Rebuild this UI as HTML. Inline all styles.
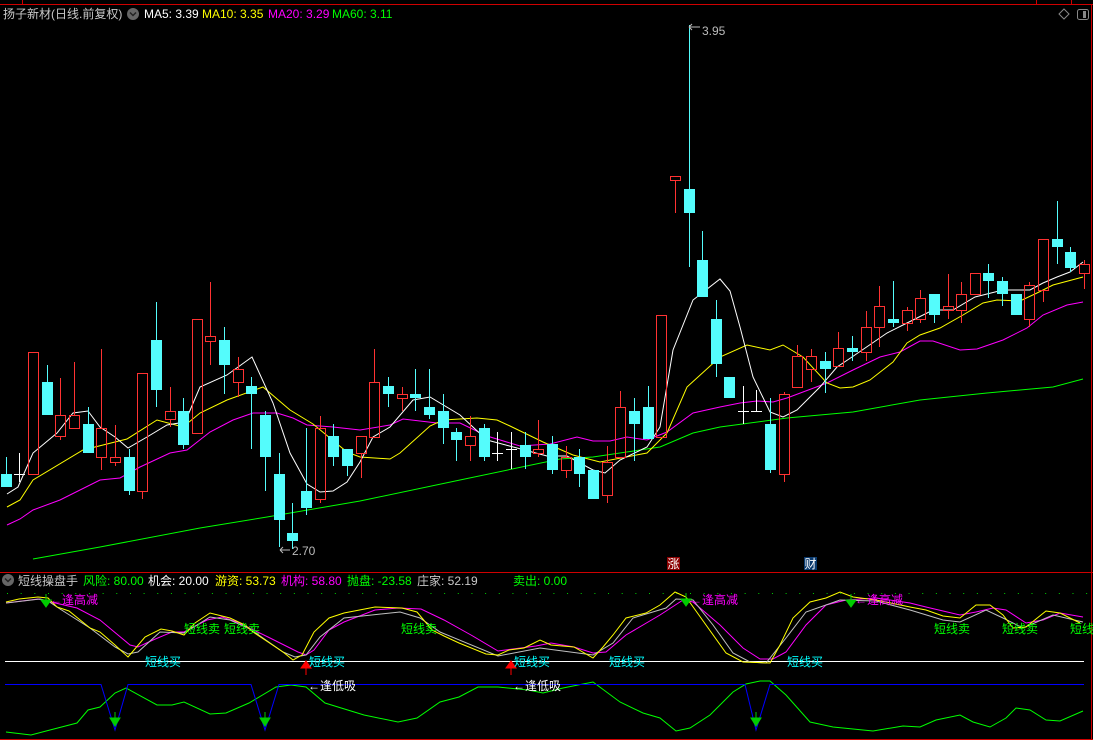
<!DOCTYPE html>
<html><head><meta charset="utf-8"><style>
html,body{margin:0;padding:0;background:#000;width:1093px;height:740px;overflow:hidden}
svg{display:block}
text{font-family:"Liberation Sans","Noto Sans CJK SC",sans-serif;font-size:12px}
</style></head><body>
<svg width="1093" height="740" viewBox="0 0 1093 740" xmlns="http://www.w3.org/2000/svg">
<rect width="1093" height="740" fill="#000"/>
<g stroke="#d00000" stroke-width="1" shape-rendering="crispEdges">
<line x1="0" y1="4.5" x2="1093" y2="4.5"/>
<line x1="22.5" y1="0" x2="22.5" y2="4"/>
<line x1="1036.5" y1="0" x2="1036.5" y2="4"/>
<line x1="1071.5" y1="0" x2="1071.5" y2="4"/>
<line x1="1091.5" y1="4" x2="1091.5" y2="740"/>
<line x1="0" y1="572.5" x2="1093" y2="572.5"/>
<line x1="0" y1="739.5" x2="1093" y2="739.5"/>
</g>
<!-- header -->
<text x="3" y="18" fill="#c8c8c8">扬子新材(日线.前复权)</text>
<circle cx="133" cy="14" r="6" fill="#666"/>
<path d="M130 12.5 L133 15.5 L136 12.5" stroke="#222" stroke-width="1.5" fill="none"/>
<text x="144" y="18" fill="#fff">MA5: 3.39</text>
<text x="202" y="18" fill="#ff0">MA10: 3.35</text>
<text x="268" y="18" fill="#f0f">MA20: 3.29</text>
<text x="332" y="18" fill="#0f0">MA60: 3.11</text>
<path d="M1064 9 L1069 14 L1064 19 L1059 14 Z" stroke="#888" fill="none"/>
<rect x="1077.5" y="9.5" width="11" height="10" rx="2" stroke="#888" fill="none"/>
<rect x="1083" y="11" width="3" height="7" fill="#888"/>
<!-- MA lines -->
<g fill="none" stroke-width="1">
<polyline stroke="#0f0" points="33,559 100,547 200,528 267,517 360,501 460,480 560,459 593,457 660,447 693,433 720,427 787,418 853,412 920,400 987,393 1053,387 1083,379"/>
<polyline stroke="#f0f" points="7,525 20,519 33,510 60,500 100,480 120,478 140,467 170,453 187,450 210,432 233,420 253,413 277,413 293,418 307,425 333,427 360,430 390,425 403,419 437,423 460,423 487,436 520,446 550,444 577,437 593,441 610,441 627,437 647,440 667,432 693,413 720,407 740,403 757,401 773,402 787,398 803,392 827,383 853,370 880,357 900,352 920,341 933,341 960,350 977,349 1003,340 1027,328 1043,315 1067,305 1083,302"/>
<polyline stroke="#ff0" points="7,507 20,500 33,480 83,450 127,439 157,420 183,427 200,413 227,400 263,387 290,410 313,424 347,452 360,457 390,459 400,453 430,426 443,420 477,418 497,420 510,426 543,442 573,455 600,462 647,453 667,433 687,387 720,357 747,345 770,350 783,345 803,357 827,383 840,388 853,387 870,380 893,362 907,343 920,335 940,328 963,315 983,303 997,300 1020,301 1037,293 1053,285 1083,277"/>
<polyline stroke="#fff" points="7,494 18,487 33,453 57,433 73,413 88,411 100,427 115,437 128,448 147,437 167,425 185,422 200,387 227,375 252,357 273,403 290,453 307,484 320,492 333,491 347,482 360,462 373,437 390,427 413,400 430,397 460,415 487,440 517,448 547,456 567,456 593,470 605,473 620,460 647,447 660,427 673,350 693,300 720,279 730,291 740,327 753,377 770,412 783,417 797,410 820,387 837,367 852,357 887,333 907,323 933,310 953,310 975,297 1003,290 1030,290 1043,283 1057,277 1070,272 1083,262"/>
</g>
<!-- candles -->
<g shape-rendering="crispEdges">
<g stroke="#54fcfc" stroke-width="1">
<line x1="6.5" y1="457" x2="6.5" y2="487"/><line x1="47.5" y1="365" x2="47.5" y2="415"/><line x1="88.5" y1="407" x2="88.5" y2="453"/><line x1="129.5" y1="449" x2="129.5" y2="495"/><line x1="156.5" y1="302" x2="156.5" y2="407"/><line x1="183.5" y1="398" x2="183.5" y2="449"/><line x1="224.5" y1="327" x2="224.5" y2="394"/><line x1="251.5" y1="377" x2="251.5" y2="449"/><line x1="265.5" y1="411" x2="265.5" y2="491"/><line x1="279.5" y1="453" x2="279.5" y2="547"/><line x1="292.5" y1="503" x2="292.5" y2="549"/><line x1="306.5" y1="428" x2="306.5" y2="515"/><line x1="333.5" y1="424" x2="333.5" y2="466"/><line x1="347.5" y1="449" x2="347.5" y2="476"/><line x1="388.5" y1="377" x2="388.5" y2="407"/><line x1="415.5" y1="369" x2="415.5" y2="411"/><line x1="429.5" y1="369" x2="429.5" y2="419"/><line x1="443.5" y1="394" x2="443.5" y2="444"/><line x1="456.5" y1="428" x2="456.5" y2="461"/><line x1="484.5" y1="424" x2="484.5" y2="461"/><line x1="525.5" y1="432" x2="525.5" y2="469"/><line x1="552.5" y1="436" x2="552.5" y2="474"/><line x1="579.5" y1="449" x2="579.5" y2="487"/><line x1="593.5" y1="470" x2="593.5" y2="499"/><line x1="634.5" y1="398" x2="634.5" y2="461"/><line x1="648.5" y1="386" x2="648.5" y2="439"/><line x1="689.5" y1="25" x2="689.5" y2="267"/><line x1="702.5" y1="231" x2="702.5" y2="297"/><line x1="716.5" y1="300" x2="716.5" y2="377"/><line x1="729.5" y1="377" x2="729.5" y2="398"/><line x1="770.5" y1="398" x2="770.5" y2="473"/><line x1="825.5" y1="352" x2="825.5" y2="393"/><line x1="852.5" y1="336" x2="852.5" y2="361"/><line x1="893.5" y1="281" x2="893.5" y2="327"/><line x1="934.5" y1="294" x2="934.5" y2="323"/><line x1="988.5" y1="264" x2="988.5" y2="298"/><line x1="1002.5" y1="277" x2="1002.5" y2="306"/><line x1="1057.5" y1="201" x2="1057.5" y2="264"/><line x1="1070.5" y1="247" x2="1070.5" y2="272"/>
</g>
<g fill="#54fcfc">
<rect x="1" y="474" width="11" height="13"/><rect x="42" y="382" width="11" height="33"/><rect x="83" y="424" width="11" height="29"/><rect x="124" y="457" width="11" height="34"/><rect x="151" y="340" width="11" height="50"/><rect x="178" y="411" width="11" height="34"/><rect x="219" y="340" width="11" height="25"/><rect x="246" y="386" width="11" height="8"/><rect x="260" y="415" width="11" height="42"/><rect x="274" y="474" width="11" height="46"/><rect x="287" y="533" width="11" height="8"/><rect x="301" y="491" width="11" height="17"/><rect x="328" y="436" width="11" height="21"/><rect x="342" y="449" width="11" height="17"/><rect x="383" y="386" width="11" height="8"/><rect x="410" y="394" width="11" height="4"/><rect x="424" y="407" width="11" height="8"/><rect x="438" y="411" width="11" height="17"/><rect x="451" y="432" width="11" height="8"/><rect x="479" y="428" width="11" height="29"/><rect x="520" y="445" width="11" height="12"/><rect x="547" y="444" width="11" height="26"/><rect x="574" y="457" width="11" height="17"/><rect x="588" y="470" width="11" height="29"/><rect x="629" y="411" width="11" height="13"/><rect x="643" y="407" width="11" height="32"/><rect x="684" y="189" width="11" height="24"/><rect x="697" y="260" width="11" height="37"/><rect x="711" y="319" width="11" height="45"/><rect x="724" y="377" width="11" height="21"/><rect x="765" y="424" width="11" height="46"/><rect x="820" y="361" width="11" height="8"/><rect x="847" y="348" width="11" height="4"/><rect x="888" y="319" width="11" height="4"/><rect x="929" y="294" width="11" height="21"/><rect x="983" y="273" width="11" height="8"/><rect x="997" y="281" width="11" height="13"/><rect x="1011" y="294" width="11" height="21"/><rect x="1052" y="239" width="11" height="8"/><rect x="1065" y="252" width="11" height="16"/>
</g>
<g stroke="#ff3232" stroke-width="1" fill="none">
<rect x="28.5" y="352.5" width="10" height="122"/>
<line x1="60.5" y1="378" x2="60.5" y2="415"/><line x1="60.5" y1="436" x2="60.5" y2="440"/><rect x="55.5" y="415.5" width="10" height="21"/>
<line x1="74.5" y1="362" x2="74.5" y2="415"/><rect x="69.5" y="415.5" width="10" height="13"/>
<line x1="101.5" y1="349" x2="101.5" y2="428"/><line x1="101.5" y1="457" x2="101.5" y2="470"/><rect x="96.5" y="428.5" width="10" height="29"/>
<line x1="115.5" y1="425" x2="115.5" y2="457"/><line x1="115.5" y1="462" x2="115.5" y2="466"/><rect x="110.5" y="457.5" width="10" height="5"/>
<line x1="142.5" y1="491" x2="142.5" y2="499"/><rect x="137.5" y="373.5" width="10" height="118"/>
<line x1="170.5" y1="387" x2="170.5" y2="411"/><line x1="170.5" y1="419" x2="170.5" y2="427"/><rect x="165.5" y="411.5" width="10" height="8"/>
<rect x="192.5" y="319.5" width="10" height="114"/>
<line x1="210.5" y1="282" x2="210.5" y2="336"/><line x1="210.5" y1="341" x2="210.5" y2="365"/><rect x="205.5" y="336.5" width="10" height="5"/>
<line x1="238.5" y1="357" x2="238.5" y2="369"/><line x1="238.5" y1="382" x2="238.5" y2="397"/><rect x="233.5" y="369.5" width="10" height="13"/>
<line x1="320.5" y1="416" x2="320.5" y2="428"/><line x1="320.5" y1="499" x2="320.5" y2="503"/><rect x="315.5" y="428.5" width="10" height="71"/>
<line x1="361.5" y1="453" x2="361.5" y2="478"/><rect x="356.5" y="436.5" width="10" height="17"/>
<line x1="374.5" y1="349" x2="374.5" y2="382"/><rect x="369.5" y="382.5" width="10" height="55"/>
<line x1="402.5" y1="387" x2="402.5" y2="394"/><line x1="402.5" y1="398" x2="402.5" y2="411"/><rect x="397.5" y="394.5" width="10" height="4"/>
<line x1="470.5" y1="416" x2="470.5" y2="436"/><line x1="470.5" y1="445" x2="470.5" y2="461"/><rect x="465.5" y="436.5" width="10" height="9"/>
<line x1="538.5" y1="420" x2="538.5" y2="449"/><line x1="538.5" y1="453" x2="538.5" y2="457"/><rect x="533.5" y="449.5" width="10" height="4"/>
<line x1="566.5" y1="446" x2="566.5" y2="457"/><line x1="566.5" y1="470" x2="566.5" y2="478"/><rect x="561.5" y="457.5" width="10" height="13"/>
<line x1="607.5" y1="446" x2="607.5" y2="462"/><line x1="607.5" y1="495" x2="607.5" y2="503"/><rect x="602.5" y="462.5" width="10" height="33"/>
<line x1="620.5" y1="391" x2="620.5" y2="407"/><rect x="615.5" y="407.5" width="10" height="50"/>
<rect x="656.5" y="315.5" width="10" height="122"/>
<line x1="675.5" y1="180" x2="675.5" y2="213"/><rect x="670.5" y="176.5" width="10" height="4"/>
<line x1="784.5" y1="392" x2="784.5" y2="394"/><line x1="784.5" y1="474" x2="784.5" y2="482"/><rect x="779.5" y="394.5" width="10" height="80"/>
<line x1="797.5" y1="345" x2="797.5" y2="356"/><rect x="792.5" y="356.5" width="10" height="31"/>
<line x1="811.5" y1="349" x2="811.5" y2="356"/><line x1="811.5" y1="369" x2="811.5" y2="382"/><rect x="806.5" y="356.5" width="10" height="13"/>
<line x1="838.5" y1="332" x2="838.5" y2="348"/><rect x="833.5" y="348.5" width="10" height="18"/>
<line x1="866.5" y1="311" x2="866.5" y2="327"/><line x1="866.5" y1="352" x2="866.5" y2="361"/><rect x="861.5" y="327.5" width="10" height="25"/>
<line x1="879.5" y1="286" x2="879.5" y2="306"/><line x1="879.5" y1="327" x2="879.5" y2="347"/><rect x="874.5" y="306.5" width="10" height="21"/>
<line x1="907.5" y1="307" x2="907.5" y2="310"/><line x1="907.5" y1="323" x2="907.5" y2="331"/><rect x="902.5" y="310.5" width="10" height="13"/>
<line x1="920.5" y1="290" x2="920.5" y2="298"/><line x1="920.5" y1="319" x2="920.5" y2="323"/><rect x="915.5" y="298.5" width="10" height="21"/>
<line x1="948.5" y1="274" x2="948.5" y2="306"/><line x1="948.5" y1="310" x2="948.5" y2="319"/><rect x="943.5" y="306.5" width="10" height="4"/>
<line x1="961.5" y1="282" x2="961.5" y2="294"/><line x1="961.5" y1="310" x2="961.5" y2="323"/><rect x="956.5" y="294.5" width="10" height="16"/>
<rect x="970.5" y="273.5" width="10" height="21"/>
<line x1="1029.5" y1="282" x2="1029.5" y2="285"/><line x1="1029.5" y1="319" x2="1029.5" y2="327"/><rect x="1024.5" y="285.5" width="10" height="34"/>
<line x1="1043.5" y1="290" x2="1043.5" y2="302"/><rect x="1038.5" y="239.5" width="10" height="51"/>
<line x1="1084.5" y1="260" x2="1084.5" y2="264"/><line x1="1084.5" y1="273" x2="1084.5" y2="289"/><rect x="1079.5" y="264.5" width="10" height="9"/>
</g>
<g stroke="#fff" stroke-width="1">
<line x1="19.5" y1="453" x2="19.5" y2="482"/><line x1="14" y1="474.5" x2="25" y2="474.5"/>
<line x1="497.5" y1="432" x2="497.5" y2="461"/><line x1="492" y1="453.5" x2="503" y2="453.5"/>
<line x1="511.5" y1="432" x2="511.5" y2="469"/><line x1="506" y1="449.5" x2="517" y2="449.5"/>
<line x1="743.5" y1="386" x2="743.5" y2="424"/><line x1="738" y1="411.5" x2="749" y2="411.5"/>
<line x1="756.5" y1="390" x2="756.5" y2="411"/><line x1="751" y1="411.5" x2="762" y2="411.5"/>
</g>
</g>
<!-- price labels -->
<path d="M689 27 L700 27 M689 27 L692 24 M689 27 L692 30" stroke="#bbb" fill="none"/>
<text x="702" y="35" fill="#bbb">3.95</text>
<path d="M280 550 L290 550 M280 550 L283 547 M280 550 L283 553" stroke="#bbb" fill="none"/>
<text x="292" y="555" fill="#bbb">2.70</text>
<rect x="667" y="557" width="13" height="13" fill="#8b0000"/>
<text x="667.5" y="568" fill="#fff" style="font-size:12px">涨</text>
<rect x="804" y="557" width="13" height="13" fill="#0a3a6e"/>
<text x="804.5" y="568" fill="#fff" style="font-size:12px">财</text>
<!-- lower header -->
<circle cx="8" cy="580" r="6" fill="#666"/>
<path d="M5 578.5 L8 581.5 L11 578.5" stroke="#222" stroke-width="1.5" fill="none"/>
<text x="18" y="585" fill="#c8c8c8">短线操盘手</text>
<text x="83" y="585" fill="#0f0">风险: 80.00</text>
<text x="148" y="585" fill="#fff">机会: 20.00</text>
<text x="215" y="585" fill="#ff0">游资: 53.73</text>
<text x="281" y="585" fill="#f0f">机构: 58.80</text>
<text x="347" y="585" fill="#0f0">抛盘: -23.58</text>
<text x="417" y="585" fill="#c8c8c8">庄家: 52.19</text>
<text x="513" y="585" fill="#0f0">卖出: 0.00</text>
<!-- dotted -->
<line x1="7" y1="593.5" x2="1093" y2="593.5" stroke="#0c0" stroke-dasharray="1 12.66"/>
<line x1="5" y1="661.5" x2="1084" y2="661.5" stroke="#fff"/>
<!-- indicator lines -->
<g fill="none" stroke-width="1">
<polyline stroke="#f0f" points="6,603 38,599 77,608 100,620 130,645 138,647 153,640 172,632 184,632 207,620 222,617 237,622 268,637 298,652 306,655 314,650 329,630 344,622 375,610 398,608 421,609 444,620 471,635 498,651 536,646 551,643 574,647 593,653 606,652 626,635 660,615 683,600 693,602 720,625 743,648 760,659 773,659 786,652 806,625 826,605 846,600 876,598 910,603 926,607 960,615 976,612 993,608 1006,610 1026,623 1043,620 1060,613 1083,617"/>
<polyline stroke="#c0c0c0" points="6,603 40,599 48,601 60,609 90,628 115,647 128,654 138,652 160,632 184,633 210,617 230,620 250,629 283,652 295,657 306,655 320,637 344,618 400,612 420,618 440,632 498,656 540,648 593,655 613,643 633,618 666,608 676,599 693,600 713,625 733,653 750,662 766,663 786,638 806,612 840,600 876,601 910,610 943,620 960,622 986,610 1003,618 1023,628 1053,615 1083,622"/>
<polyline stroke="#ff0" points="6,602 19,599 38,597 48,598 57,607 69,611 90,628 100,632 115,645 128,657 134,650 145,637 161,629 172,631 184,635 195,623 210,613 230,618 245,625 253,632 268,642 283,652 293,660 302,655 314,632 329,618 344,613 375,607 402,608 417,612 432,630 444,636 459,643 486,654 498,655 509,650 524,648 540,640 551,645 574,647 593,658 603,647 613,635 626,618 646,613 660,605 675,592 686,597 706,625 726,653 743,662 770,663 780,645 793,618 810,602 826,598 840,592 853,597 876,600 910,607 926,610 943,616 960,618 976,605 990,605 1003,615 1013,628 1026,627 1046,611 1060,613 1080,623"/>
<polyline stroke="#0f0" points="6,732 31,735 50,730 77,723 88,710 100,707 115,693 126,688 157,705 172,705 184,702 210,714 226,713 249,703 276,687 291,685 306,687 325,703 364,715 398,722 417,718 440,702 459,697 478,687 498,687 528,690 543,693 563,688 593,682 620,702 643,713 660,718 676,731 690,728 710,715 733,692 746,684 760,681 770,681 786,695 810,722 833,727 873,731 903,726 920,727 936,720 960,715 973,722 990,727 1006,718 1016,708 1030,710 1046,720 1060,721 1083,711"/>
<polyline stroke="#0000ff" points="5,684.5 101,684.5 115,730 128,684.5 251,684.5 265,730 279,684.5 745,684.5 756,730 770,684.5 1084,684.5"/>
</g>
<!-- arrows -->
<g fill="#0c0" stroke="#0c0">
<line x1="46" y1="594" x2="46" y2="602"/><path d="M41 600 L51 600 L46 607 Z"/>
<line x1="686" y1="593" x2="686" y2="601"/><path d="M681 599 L691 599 L686 606 Z"/>
<line x1="851" y1="594" x2="851" y2="602"/><path d="M846 600 L856 600 L851 607 Z"/>
<line x1="115" y1="712" x2="115" y2="720"/><path d="M110 718 L120 718 L115 726 Z"/>
<line x1="265" y1="712" x2="265" y2="720"/><path d="M260 718 L270 718 L265 726 Z"/>
<line x1="756" y1="712" x2="756" y2="720"/><path d="M751 718 L761 718 L756 726 Z"/>
</g>
<g fill="#f00" stroke="#f00">
<path d="M301 668 L311 668 L306 661 Z"/><line x1="306" y1="667" x2="306" y2="675"/>
<path d="M506 668 L516 668 L511 661 Z"/><line x1="511" y1="667" x2="511" y2="675"/>
</g>
<!-- labels -->
<g style="font-size:13px">
<text x="50" y="604" fill="#f0f">←逢高减</text>
<text x="690" y="604" fill="#f0f">←逢高减</text>
<text x="855" y="604" fill="#f0f">←逢高减</text>
<text x="184" y="633" fill="#0f0">短线卖</text>
<text x="224" y="633" fill="#0f0">短线卖</text>
<text x="401" y="633" fill="#0f0">短线卖</text>
<text x="934" y="633" fill="#0f0">短线卖</text>
<text x="1002" y="633" fill="#0f0">短线卖</text>
<text x="1070" y="633" fill="#0f0">短线卖</text>
<text x="145" y="666" fill="#0ff">短线买</text>
<text x="309" y="666" fill="#0ff">短线买</text>
<text x="514" y="666" fill="#0ff">短线买</text>
<text x="609" y="666" fill="#0ff">短线买</text>
<text x="787" y="666" fill="#0ff">短线买</text>
<text x="308" y="690" fill="#fff">←逢低吸</text>
<text x="513" y="690" fill="#fff">←逢低吸</text>
</g>
</svg>
</body></html>
